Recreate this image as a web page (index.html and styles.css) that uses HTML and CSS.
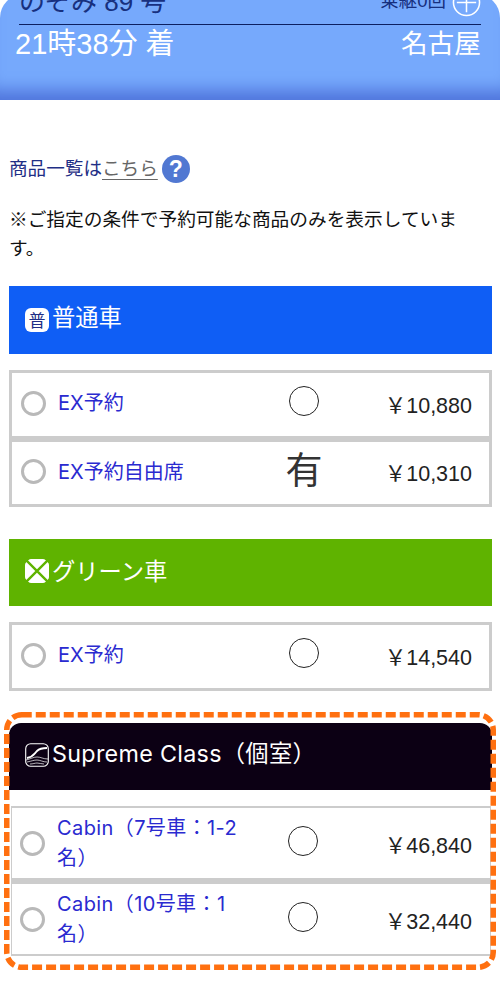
FILE: index.html
```html
<!DOCTYPE html>
<html lang="ja">
<head>
    <meta charset="UTF-8">
    <meta name="viewport" content="width=device-width, initial-scale=1.0">
    <title>商品選択</title>
    <link rel="stylesheet" href="styles.css">
</head>
<body>
    <header class="train-header">
        <div class="train-top">
            <span class="train-name">のぞみ 89 号</span>
            <span class="transfer">乗継0回</span>
            <svg class="transfer-icon" viewBox="0 0 30 30" aria-hidden="true">
                <circle cx="15" cy="15" r="13.5" fill="none" stroke="#fff" stroke-width="1.6"/>
                <path d="M15 5v20M5 15h20" stroke="#fff" stroke-width="1.6"/>
            </svg>
        </div>
        <div class="train-arrival">
            <span class="arrival-time">21時38分 着</span>
            <span class="arrival-station">名古屋</span>
        </div>
    </header>

    <main class="content">
        <p class="info-line">
            <span class="info-text">商品一覧は<a class="info-link" href="#">こちら</a></span><span class="help-icon">?</span>
        </p>
        <p class="note">※ご指定の条件で予約可能な商品のみを表示しています。</p>

        <section class="seat-section">
            <h2 class="seat-title seat-title-normal">
                <span class="title-icon title-icon-normal">普</span>普通車
            </h2>
            <div class="seat-table">
                <div class="seat-row">
                    <span class="radio"></span>
                    <span class="seat-label">EX予約</span>
                    <span class="seat-mark"><span class="mark-circle"></span></span>
                    <span class="seat-price">￥10,880</span>
                </div>
                <div class="seat-row">
                    <span class="radio"></span>
                    <span class="seat-label">EX予約自由席</span>
                    <span class="seat-mark seat-mark-text">有</span>
                    <span class="seat-price">￥10,310</span>
                </div>
            </div>
        </section>

        <section class="seat-section">
            <h2 class="seat-title seat-title-green">
                <svg class="title-icon" viewBox="0 0 24 24" aria-hidden="true">
                    <rect width="24" height="24" rx="6" fill="#fff"/>
                    <path d="M0 0 24 24M24 0 0 24" stroke="#5fb300" stroke-width="2.400"/>
                    <path d="M0 4.500V0h4.500zM19.500 0H24v4.500zM24 19.500V24h-4.500zM4.500 24H0v-4.500z" fill="#5fb300"/>
                </svg>グリーン車
            </h2>
            <div class="seat-table">
                <div class="seat-row">
                    <span class="radio"></span>
                    <span class="seat-label">EX予約</span>
                    <span class="seat-mark"><span class="mark-circle"></span></span>
                    <span class="seat-price">￥14,540</span>
                </div>
            </div>
        </section>

        <section class="seat-section seat-section-supreme">
            <h2 class="seat-title seat-title-supreme">
                <svg class="title-icon" viewBox="0 0 24 24" fill="none" stroke="#fff" aria-hidden="true">
                    <rect x=".7" y=".7" width="22.600" height="22.600" rx="5" stroke-width="1.100"/>
                    <path stroke-width="1.800" d="M2 15c6-1 7-4 10-7s6-3 10-3"/>
                    <path stroke-width=".7" d="M1 17c5-1 7-3 11-3s6 2 11 2M2 19c5-1 7-2 10-2s6 2 10 2M5 21c3 0 5-1 7-1s5 1 7 1"/>
                </svg>Supreme Class（個室）
            </h2>
            <div class="seat-table seat-table-supreme">
                <div class="seat-row seat-row-tall">
                    <span class="radio"></span>
                    <span class="seat-label">Cabin（7号車：1-2名）</span>
                    <span class="seat-mark"><span class="mark-circle"></span></span>
                    <span class="seat-price">￥46,840</span>
                </div>
                <div class="seat-row seat-row-tall">
                    <span class="radio"></span>
                    <span class="seat-label">Cabin（10号車：1名）</span>
                    <span class="seat-mark"><span class="mark-circle"></span></span>
                    <span class="seat-price">￥32,440</span>
                </div>
            </div>
            <svg class="dash-frame" viewBox="0 0 492 258" aria-hidden="true">
                <rect x="2.750" y="2.750" width="486.500" height="252.500" rx="15" fill="none"
                      stroke="#ff7010" stroke-width="5.500" stroke-dasharray="10 4"/>
            </svg>
        </section>
    </main>
</body>
</html>
```

FILE: styles.css
```css
* {
    margin: 0;
    padding: 0;
    box-sizing: border-box;
}

body {
    background-color: white;
    color: #111;
    font-family: "Liberation Sans", "Noto Sans CJK JP", sans-serif;
    height: 1000px;
    overflow: hidden;
}

.train-header {
    height: 106px;
    margin-top: -6px;
    padding: 0 19px;
    border-radius: 24px 24px 0 0;
    background-color: #76a9fc;
    box-shadow: inset 0 -22px 16px -12px #5075dc;
    overflow: hidden;
}

.train-top {
    display: flex;
    align-items: flex-end;
    height: 31px;
    border-bottom: 1.700px solid #0d2060;
    color: #17307f;
}

.train-name {
    font-size: 26px;
    line-height: 30px;
    margin-bottom: 7px;
}

.transfer {
    font-size: 18.500px;
    line-height: 20px;
    margin-left: auto;
    margin-bottom: 13px;
    margin-right: 6px;
}

.transfer-icon {
    width: 29px;
    height: 29px;
    margin-bottom: 7px;
}

.train-arrival {
    display: flex;
    align-items: center;
    justify-content: space-between;
    margin-left: -4px;
    margin-top: 3px;
    color: white;
    line-height: 32px;
}

.arrival-time {
    font-size: 29px;
}

.arrival-station {
    font-size: 26.700px;
}

.content {
    padding: 0 8px 0 9px;
}

.info-line {
    display: flex;
    align-items: center;
    height: 28px;
    margin-top: 55px;
    color: #1f2f86;
    font-size: 18.600px;
}

.info-text {
    margin-bottom: 5px;
}

.info-link {
    color: #666;
    text-underline-offset: 4px;
}

.help-icon {
    display: flex;
    align-items: center;
    justify-content: center;
    width: 28px;
    height: 28px;
    margin-left: 4px;
    border-radius: 50%;
    background-color: #5178d2;
    color: white;
    font-size: 23px;
    font-weight: bold;
}

.note {
    margin-top: 22px;
    font-size: 18.700px;
    line-height: 29px;
    margin-bottom: 23px;
}

.seat-section {
    margin-bottom: 32px;
}

.seat-title {
    display: flex;
    align-items: center;
    height: 68px;
    padding: 0 0 8px 16px;
    color: white;
    font-size: 23.300px;
    font-weight: normal;
}

.seat-title-normal {
    background-color: #0f5ef5;
}

.seat-title-green {
    height: 67px;
    padding-bottom: 5px;
    background-color: #5fb300;
}

.seat-title-green .title-icon {
    margin-top: 2px;
}

.seat-title-supreme {
    height: 67.500px;
    padding-bottom: 9px;
    border-radius: 12px 12px 0 0;
    background-color: #0c0014;
    font-family: Inter, "Noto Sans CJK JP", sans-serif;
    letter-spacing: 0.3px;
}

.seat-title-supreme .title-icon {
    margin-top: 6.500px;
}

.title-icon {
    display: flex;
    flex-shrink: 0;
    align-items: center;
    justify-content: center;
    width: 24px;
    height: 24px;
    margin-top: 7px;
    margin-right: 3px;
}

.title-icon-normal {
    border-radius: 6px;
    background-color: white;
    color: #1f2f86;
    font-family: "Noto Sans CJK JP", sans-serif;
    font-size: 17px;
}

.seat-table {
    margin-top: 16px;
}

.seat-section-supreme {
    position: relative;
}

/* 破線枠はコンテンツの上に重ねる */
.dash-frame {
    position: absolute;
    top: -10.500px;
    left: -5px;
    width: 492px;
    height: 258px;
    pointer-events: none;
}

.seat-row {
    display: flex;
    align-items: center;
    height: 68.500px;
    padding: 0 17px 2px 9px;
    border: 3px solid #ccc;
    background-color: white;
}

.seat-table-supreme {
    margin: 16px 1.500px 0;
}

.seat-row-tall {
    height: 75px;
    padding: 0 17.500px 0 8.500px;
    border-width: 3px 1.500px;
}

.seat-row-tall:first-child {
    border-top-width: 2px;
}

.seat-row-tall:last-child {
    border-bottom-width: 2px;
}

.seat-row-tall .seat-label {
    letter-spacing: 0.4px;
}

.radio {
    flex-shrink: 0;
    width: 25px;
    height: 25px;
    border: 3px solid #b9b9b9;
    border-radius: 50%;
}

.seat-label {
    width: 190px;
    margin-left: 12px;
    color: #2a2ad0;
    font-family: Inter, "Noto Sans CJK JP", sans-serif;
    font-size: 20px;
    line-height: 30px;
}

.seat-mark {
    display: flex;
    justify-content: center;
    width: 80px;
    margin-left: 16px;
    color: #333;
}

.seat-mark-text {
    font-size: 37px;
    line-height: 40px;
}

.mark-circle {
    width: 30px;
    height: 30px;
    margin-bottom: 4px;
    border: 1.300px solid #222;
    border-radius: 50%;
}

.seat-price {
    margin-left: auto;
    color: #222;
    font-size: 21.500px;
    white-space: nowrap;
}
```
